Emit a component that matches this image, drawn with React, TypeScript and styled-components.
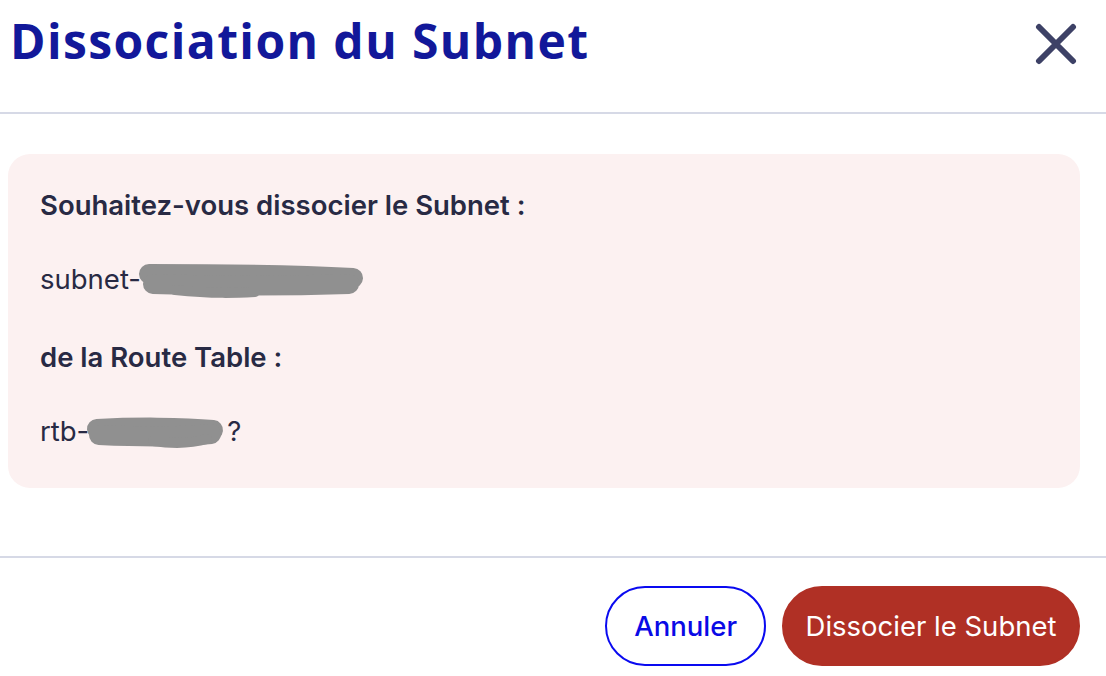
import { FC } from 'react'
import styled, { createGlobalStyle } from 'styled-components'

const GlobalStyle = createGlobalStyle`
  body {
    margin: 0;
    background: #ffffff;
  }
`

const Modal = styled.div`
  width: 1106px;
  height: 676px;
  display: flex;
  flex-direction: column;
  font-family: Inter, 'Noto Sans', sans-serif;
  color: #282a44;
`

const Header = styled.header`
  height: 112px;
  display: flex;
  align-items: flex-start;
  justify-content: space-between;
  padding: 0 26px 0 10px;
  border-bottom: 2px solid #d6d9e6;
  box-sizing: content-box;
`

const Title = styled.h1`
  margin: 15px 0 0;
  font-family: 'Open Sans', 'Noto Sans', sans-serif;
  font-size: 48px;
  line-height: 52px;
  font-weight: 700;
  color: #12189a;
  letter-spacing: 1.4px;
`

const CloseButton = styled.button`
  margin-top: 20px;
  width: 48px;
  height: 48px;
  padding: 0;
  border: none;
  background: transparent;
  display: flex;
  align-items: center;
  justify-content: center;
  cursor: pointer;
`

const Content = styled.div`
  flex: 1;
  padding: 40px 26px 0 8px;
`

const WarningBox = styled.div`
  height: 334px;
  box-sizing: border-box;
  background: #fcf1f1;
  border-radius: 22px;
  padding: 34px 32px 0;
  display: flex;
  flex-direction: column;
`

const Label = styled.p`
  margin: 0;
  font-size: 27.5px;
  line-height: 34px;
  font-weight: 600;
`

const Value = styled.p`
  margin: 40px 0 44px;
  height: 34px;
  font-size: 27.5px;
  line-height: 34px;
  font-weight: 400;
  display: flex;
  align-items: center;
`

const Redacted = styled.svg`
  display: block;
  margin-left: -6px;
  margin-top: 4px;
  flex-shrink: 0;
`

const Footer = styled.footer`
  height: 120px;
  border-top: 2px solid #d6d9e6;
  display: flex;
  justify-content: flex-end;
  align-items: flex-start;
  gap: 16px;
  padding: 28px 26px 0 0;
  box-sizing: border-box;
`

const Button = styled.button<{ $variant: 'outline' | 'danger' }>`
  height: 80px;
  padding: 0 ${({ $variant }) => ($variant === 'outline' ? '27px' : '21.5px')};
  border-radius: 40px;
  font-family: Inter, 'Noto Sans', sans-serif;
  font-size: 27.5px;
  font-weight: ${({ $variant }) => ($variant === 'outline' ? 500 : 400)};
  cursor: pointer;
  border: 2px solid ${({ $variant }) => ($variant === 'outline' ? '#0a0af0' : '#b03025')};
  background: ${({ $variant }) => ($variant === 'outline' ? '#ffffff' : '#b03025')};
  color: ${({ $variant }) => ($variant === 'outline' ? '#0a0ae6' : '#ffffff')};
`

const CloseIcon: FC = () => (
  <svg width="42" height="42" viewBox="0 0 42 42" fill="none">
    <path
      d="M4 4L38 38M38 4L4 38"
      stroke="#3d4166"
      strokeWidth="6"
      strokeLinecap="round"
    />
  </svg>
)

// hand-drawn looking marker strokes hiding the ids
const SubnetMask: FC = () => (
  <Redacted width="232" height="38" viewBox="0 0 232 38" fill="none">
    <g stroke="#909090" strokeLinecap="round">
      <path d="M14 12 C60 12 160 13 218 16" strokeWidth="20" />
      <path d="M18 22 C80 24 150 24 214 22" strokeWidth="20" />
      <path d="M40 28 C80 32 100 31 120 30" strokeWidth="10" />
    </g>
  </Redacted>
)

const RouteTableMask: FC = () => (
  <Redacted width="144" height="32" viewBox="0 0 144 32" fill="none">
    <g stroke="#909090" strokeLinecap="round">
      <path d="M14 12 C50 10 100 10 130 13" strokeWidth="20" />
      <path d="M16 18 C60 20 100 20 128 17" strokeWidth="20" />
      <path d="M70 24 C90 27 110 26 124 22" strokeWidth="10" />
    </g>
  </Redacted>
)

const App: FC = () => {
  return (
    <>
      <GlobalStyle />
      <Modal>
        <Header>
          <Title>Dissociation du Subnet</Title>
          <CloseButton aria-label="Fermer">
            <CloseIcon />
          </CloseButton>
        </Header>
        <Content>
          <WarningBox>
            <Label>Souhaitez-vous dissocier le Subnet :</Label>
            <Value>
              subnet-
              <SubnetMask />
            </Value>
            <Label>de la Route Table :</Label>
            <Value>
              rtb-
              <RouteTableMask />
              ?
            </Value>
          </WarningBox>
        </Content>
        <Footer>
          <Button $variant="outline">Annuler</Button>
          <Button $variant="danger">Dissocier le Subnet</Button>
        </Footer>
      </Modal>
    </>
  )
}

export default App
